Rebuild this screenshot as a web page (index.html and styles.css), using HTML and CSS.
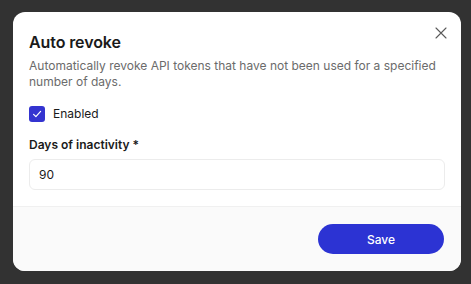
FILE: index.html
```html
<!DOCTYPE html>
<html lang="en">
<head>
<meta charset="utf-8">
<title>Auto revoke</title>
<link rel="stylesheet" href="styles.css">
</head>
<body>
<div class="overlay">
  <div class="dialog" role="dialog" aria-labelledby="dlg-title">
    <div class="dialog-body">
      <div class="header">
        <h2 id="dlg-title" class="title">Auto revoke</h2>
        <button class="close" aria-label="Close">
          <svg width="12" height="12" viewBox="0 0 12 12" fill="none" stroke="#5a5a5a" stroke-width="1.1" stroke-linecap="round"><path d="M1 1L11 11M11 1L1 11"/></svg>
        </button>
      </div>
      <p class="desc">Automatically revoke API tokens that have not been used for a specified number of days.</p>
      <label class="check-row">
        <span class="checkbox">
          <svg width="12" height="12" viewBox="0 0 12 12" fill="none" stroke="#fff" stroke-width="1.2" stroke-linecap="round" stroke-linejoin="round"><path d="M2.6 6.3L4.9 8.6L9.6 3.4"/></svg>
        </span>
        <span class="check-label">Enabled</span>
      </label>
      <div class="field">
        <div class="field-label">Days of inactivity *</div>
        <div class="input">90</div>
      </div>
    </div>
    <div class="footer">
      <button class="save">Save</button>
    </div>
  </div>
</div>
</body>
</html>
```
FILE: styles.css
```css
html, body {
  margin: 0;
  padding: 0;
  background: #323232;
  font-family: Inter, "Liberation Sans", sans-serif;
}
.overlay {
  padding: 12px 0 0 13px;
}
.dialog {
  width: 448px;
  height: 259px;
  background: #fff;
  border-radius: 12px;
  overflow: hidden;
  display: flex;
  flex-direction: column;
}
.dialog-body {
  padding: 19px 16px 16px 16px;
  border-bottom: 1px solid #f0f0f0;
}
.header {
  display: flex;
  justify-content: space-between;
  align-items: flex-start;
}
.title {
  margin: 0;
  font-size: 16px;
  line-height: 22px;
  font-weight: 600;
  color: #1a1a1a;
  letter-spacing: -0.1px;
}
.close {
  border: 0;
  background: none;
  padding: 0;
  margin: -4px -2px 0 0;
  width: 12px;
  height: 12px;
  display: flex;
}
.desc {
  margin: 5px 0 0 0;
  font-size: 12px;
  line-height: 16px;
  color: #6b6b6b;
}
.check-row {
  display: flex;
  align-items: center;
  gap: 8px;
  margin-top: 15px;
  height: 17px;
}
.checkbox {
  width: 16px;
  height: 16px;
  border-radius: 3px;
  background: #3434d0;
  display: flex;
  align-items: center;
  justify-content: center;
}
.check-label {
  font-size: 12px;
  line-height: 16px;
  color: #1a1a1a;
}
.field {
  margin-top: 15px;
}
.field-label {
  font-size: 12px;
  line-height: 16px;
  font-weight: 600;
  color: #1a1a1a;
}
.input {
  margin-top: 6px;
  height: 29px;
  border: 1px solid #ececec;
  border-radius: 6px;
  padding: 0 9px;
  display: flex;
  align-items: center;
  font-size: 12px;
  color: #1a1a1a;
}
.footer {
  flex: 1;
  background: #fafafa;
  display: flex;
  justify-content: flex-end;
  align-items: flex-start;
  padding: 17px 17px 0 0;
}
.save {
  width: 126px;
  height: 30px;
  border: 0;
  border-radius: 15px;
  background: #2c33d3;
  color: #fff;
  font-family: Inter, "Liberation Sans", sans-serif;
  font-size: 12px;
  font-weight: 500;
}
```
